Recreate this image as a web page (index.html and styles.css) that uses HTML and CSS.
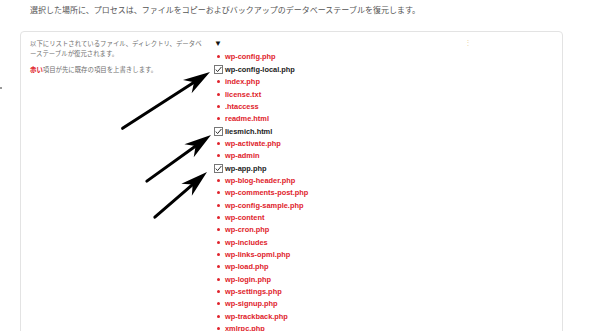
FILE: index.html
```html
<!DOCTYPE html>
<html lang="ja">

<head>
    <meta charset="UTF-8">
    <meta name="viewport" content="width=device-width, initial-scale=1.0">
    <title>復元</title>
    <link rel="stylesheet" href="styles.css">
</head>

<body>
    <span class="stray-dot"></span>
    <p class="intro">選択した場所に、プロセスは、ファイルをコピーおよびバックアップのデータベーステーブルを復元します。</p>
    <div class="card">
        <div class="notes">
            <p>以下にリストされているファイル、ディレクトリ、データベーステーブルが復元されます。</p>
            <p><span class="red-word">赤い</span>項目が先に既存の項目を上書きします。</p>
        </div>
        <div class="tree">
            <div class="toggle">▼</div>
            <ul class="files">
                <li class="over"><span class="dot"></span>wp-config.php</li>
                <li class="keep"><span class="box"><svg viewBox="0 0 9 9" width="9" height="9"><path d="M1.8 4.6 L3.6 6.6 L7.4 2" fill="none" stroke="#333" stroke-width="1"/></svg></span>wp-config-local.php</li>
                <li class="over"><span class="dot"></span>index.php</li>
                <li class="over"><span class="dot"></span>license.txt</li>
                <li class="over"><span class="dot"></span>.htaccess</li>
                <li class="over"><span class="dot"></span>readme.html</li>
                <li class="keep"><span class="box"><svg viewBox="0 0 9 9" width="9" height="9"><path d="M1.8 4.6 L3.6 6.6 L7.4 2" fill="none" stroke="#333" stroke-width="1"/></svg></span>liesmich.html</li>
                <li class="over"><span class="dot"></span>wp-activate.php</li>
                <li class="over"><span class="dot"></span>wp-admin</li>
                <li class="keep"><span class="box"><svg viewBox="0 0 9 9" width="9" height="9"><path d="M1.8 4.6 L3.6 6.6 L7.4 2" fill="none" stroke="#333" stroke-width="1"/></svg></span>wp-app.php</li>
                <li class="over"><span class="dot"></span>wp-blog-header.php</li>
                <li class="over"><span class="dot"></span>wp-comments-post.php</li>
                <li class="over"><span class="dot"></span>wp-config-sample.php</li>
                <li class="over"><span class="dot"></span>wp-content</li>
                <li class="over"><span class="dot"></span>wp-cron.php</li>
                <li class="over"><span class="dot"></span>wp-includes</li>
                <li class="over"><span class="dot"></span>wp-links-opml.php</li>
                <li class="over"><span class="dot"></span>wp-load.php</li>
                <li class="over"><span class="dot"></span>wp-login.php</li>
                <li class="over"><span class="dot"></span>wp-settings.php</li>
                <li class="over"><span class="dot"></span>wp-signup.php</li>
                <li class="over"><span class="dot"></span>wp-trackback.php</li>
                <li class="over"><span class="dot"></span>xmlrpc.php</li>
            </ul>
        </div>
        <span class="handle">⋮</span>
    </div>

    <!-- annotation arrows drawn over the screenshot -->
    <svg class="arrows" width="600" height="331" viewBox="0 0 600 331">
        <g transform="translate(210 72) rotate(-32.8)">
            <line x1="-104" y1="0" x2="-18" y2="0" />
            <polygon points="0,0 -27,-8 -19,0 -27,8" />
        </g>
        <g transform="translate(211 135) rotate(-35.7)">
            <line x1="-79" y1="0" x2="-18" y2="0" />
            <polygon points="0,0 -27,-8 -19,0 -27,8" />
        </g>
        <g transform="translate(207 172) rotate(-40.9)">
            <line x1="-69" y1="0" x2="-18" y2="0" />
            <polygon points="0,0 -27,-8 -19,0 -27,8" />
        </g>
    </svg>
</body>

</html>
```

FILE: styles.css
```css
body {
    font-family: "Liberation Sans", "Noto Sans CJK JP", sans-serif;
    margin: 0;
    padding: 0 37px 0 20px;
    height: 331px;
    overflow: hidden;
    background: #fff;
}

.intro {
    margin: 0;
    padding: 5px 0 0 10px;
    font-size: 8px;
    line-height: 12px;
    color: #555;
}

.card {
    position: relative;
    margin-top: 14px;
    border: 1px solid #e3e3e3;
    border-radius: 4px;
    padding: 7px 9px;
    min-height: 420px;
    display: grid;
    grid-template-columns: 184px 1fr;
}

.notes {
    padding-right: 10px;
    font-size: 6.4px;
    line-height: 9.5px;
    color: #707070;
}

.notes p {
    margin: 0 0 7px;
}

.red-word {
    color: #e0222b;
    font-weight: bold;
}

.toggle {
    font-size: 8px;
    line-height: 10px;
    height: 10px;
    margin-bottom: 1.8px;
    color: #111;
}

.files {
    list-style: none;
    margin: 0;
    padding: 0;
}

.files li {
    display: flex;
    align-items: center;
    height: 12.35px;
    font-size: 7.4px;
    font-weight: bold;
}

.over {
    color: #e0222b;
}

.keep {
    color: #222;
}

.dot {
    width: 3px;
    height: 3px;
    border-radius: 50%;
    background: #e0222b;
    margin: 0 5px 0 3px;
}

.box {
    width: 9px;
    height: 9px;
    margin-right: 2px;
    box-sizing: border-box;
    border: 1px solid #777;
    display: flex;
}

.box svg {
    margin: -1px;
}

.handle {
    position: absolute;
    top: 6px;
    right: 90px;
    font-size: 8px;
    color: #ecd7b0;
}

.stray-dot {
    position: absolute;
    left: 0;
    top: 87px;
    width: 2px;
    height: 2px;
    background: #999;
}

.arrows {
    position: absolute;
    left: 0;
    top: 0;
}

.arrows line {
    stroke: #000;
    stroke-width: 3;
    stroke-linecap: round;
}

.arrows polygon {
    fill: #000;
}
```
